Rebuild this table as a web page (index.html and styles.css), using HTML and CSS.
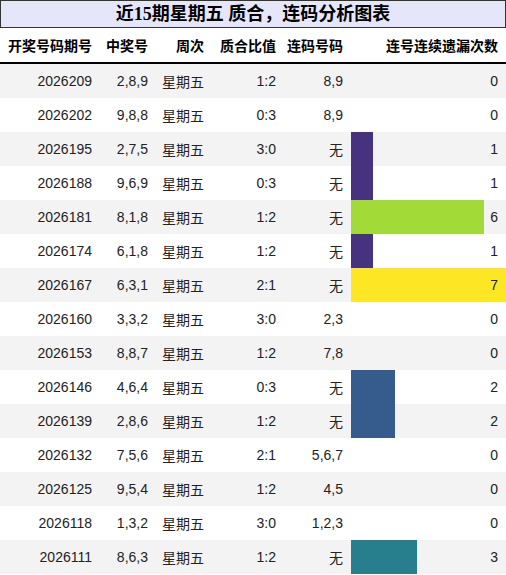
FILE: index.html
```html
<!DOCTYPE html>
<html lang="zh">
<head>
    <meta charset="UTF-8">
    <title>近15期星期五 质合，连码分析图表</title>
    <link rel="stylesheet" href="styles.css">
</head>
<body>
    <table class="chart">
        <caption>近15期星期五 质合，连码分析图表</caption>
        <colgroup>
            <col class="c-issue">
            <col class="c-num">
            <col class="c-week">
            <col class="c-ratio">
            <col class="c-link">
            <col class="c-miss">
        </colgroup>
        <thead>
            <tr>
                <th>开奖号码期号</th>
                <th>中奖号</th>
                <th>周次</th>
                <th>质合比值</th>
                <th>连码号码</th>
                <th>连号连续遗漏次数</th>
            </tr>
        </thead>
        <tbody>
            <tr><td>2026209</td><td>2,8,9</td><td>星期五</td><td>1:2</td><td>8,9</td><td class="bar">0</td></tr>
            <tr><td>2026202</td><td>9,8,8</td><td>星期五</td><td>0:3</td><td>8,9</td><td class="bar">0</td></tr>
            <tr><td>2026195</td><td>2,7,5</td><td>星期五</td><td>3:0</td><td>无</td><td class="bar" style="--w:14.29%;--c:#46327e">1</td></tr>
            <tr><td>2026188</td><td>9,6,9</td><td>星期五</td><td>0:3</td><td>无</td><td class="bar" style="--w:14.29%;--c:#46327e">1</td></tr>
            <tr><td>2026181</td><td>8,1,8</td><td>星期五</td><td>1:2</td><td>无</td><td class="bar" style="--w:85.71%;--c:#a2da37">6</td></tr>
            <tr><td>2026174</td><td>6,1,8</td><td>星期五</td><td>1:2</td><td>无</td><td class="bar" style="--w:14.29%;--c:#46327e">1</td></tr>
            <tr><td>2026167</td><td>6,3,1</td><td>星期五</td><td>2:1</td><td>无</td><td class="bar" style="--w:100%;--c:#fde725">7</td></tr>
            <tr><td>2026160</td><td>3,3,2</td><td>星期五</td><td>3:0</td><td>2,3</td><td class="bar">0</td></tr>
            <tr><td>2026153</td><td>8,8,7</td><td>星期五</td><td>1:2</td><td>7,8</td><td class="bar">0</td></tr>
            <tr><td>2026146</td><td>4,6,4</td><td>星期五</td><td>0:3</td><td>无</td><td class="bar" style="--w:28.57%;--c:#365c8d">2</td></tr>
            <tr><td>2026139</td><td>2,8,6</td><td>星期五</td><td>1:2</td><td>无</td><td class="bar" style="--w:28.57%;--c:#365c8d">2</td></tr>
            <tr><td>2026132</td><td>7,5,6</td><td>星期五</td><td>2:1</td><td>5,6,7</td><td class="bar">0</td></tr>
            <tr><td>2026125</td><td>9,5,4</td><td>星期五</td><td>1:2</td><td>4,5</td><td class="bar">0</td></tr>
            <tr><td>2026118</td><td>1,3,2</td><td>星期五</td><td>3:0</td><td>1,2,3</td><td class="bar">0</td></tr>
            <tr><td>2026111</td><td>8,6,3</td><td>星期五</td><td>1:2</td><td>无</td><td class="bar" style="--w:42.86%;--c:#277f8e">3</td></tr>
        </tbody>
    </table>
</body>
</html>
```

FILE: styles.css
```css
body {
    margin: 0;
    font-family: "Liberation Sans", "Noto Sans CJK SC", sans-serif;
    font-size: 14px;
    color: #222;
}
.chart {
    width: 506px;
    table-layout: fixed;
    border-collapse: collapse;
}
.chart caption {
    height: 26px;
    line-height: 26px;
    border: 1px solid #333;
    background-color: #e6e6fa;
    font-family: "Liberation Serif", "Noto Sans CJK SC", serif;
    font-size: 18px;
    font-weight: bold;
    color: #000;
    text-align: center;
}
.c-issue { width: 100px; }
.c-num { width: 56px; }
.c-week { width: 56px; }
.c-ratio { width: 72px; }
.c-link { width: 67px; }
.c-miss { width: 155px; }
.chart th {
    height: 34px;
    padding: 0 8px 0 0;
    border-bottom: 2px solid #000;
    text-align: right;
    font-weight: bold;
    color: #000;
    white-space: nowrap;
    vertical-align: middle;
}
.chart td {
    height: 34px;
    padding: 0 8px 0 0;
    text-align: right;
    vertical-align: middle;
    white-space: nowrap;
}
.chart tbody tr:nth-child(odd) {
    background-color: #f3f3f3;
}
.bar {
    --w: 0%;
    --c: transparent;
    background: linear-gradient(90deg, var(--c) var(--w), transparent var(--w));
}
```
